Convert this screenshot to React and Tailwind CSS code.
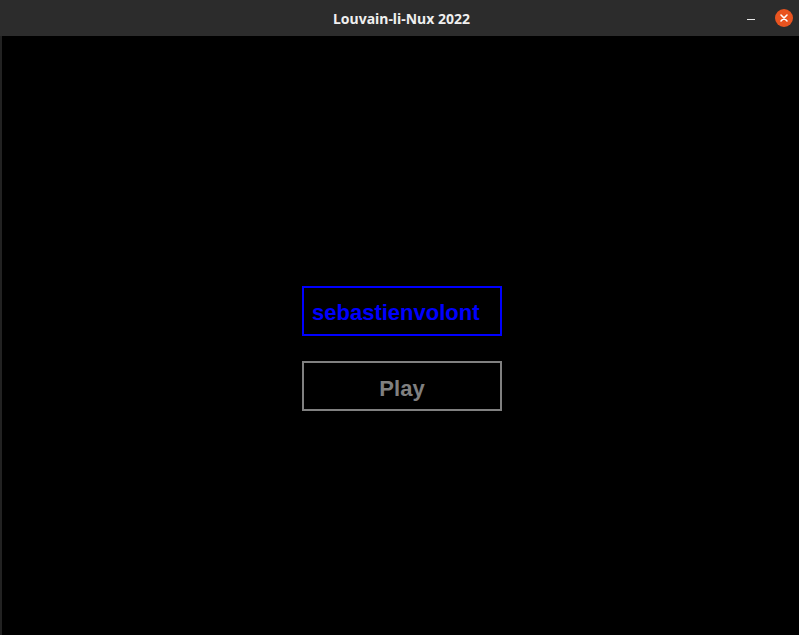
import React from "react";

function TitleBar() {
  return (
    <div className="relative h-[36px] bg-[#2c2c2c] flex items-center justify-center">
      <span
        className="text-[14px] font-bold text-[#efefef] ml-[4px]"
        style={{ fontFamily: '"Noto Sans", "DejaVu Sans", sans-serif' }}
      >
        Louvain-li-Nux 2022
      </span>
      <div className="absolute right-[6px] top-0 h-full flex items-center gap-[20px]">
        {/* minimize */}
        <div className="w-[8px] h-[1px] bg-[#e8e8e8] mt-[3px]" />
        {/* close */}
        <div className="w-[18px] h-[18px] rounded-full bg-[#e95420] flex items-center justify-center mr-[0px]">
          <svg width="10" height="10" viewBox="0 0 10 10">
            <path d="M2 2 L8 8 M8 2 L2 8" stroke="#ffffff" strokeWidth="1.6" strokeLinecap="round" />
          </svg>
        </div>
      </div>
    </div>
  );
}

export default function App() {
  return (
    <div className="w-[799px] h-[635px] bg-black flex flex-col overflow-hidden">
      <TitleBar />
      <div
        className="flex-1 bg-black border-l-2 border-[#222222] flex flex-col pt-[250px] pl-[300px] gap-[25px]"
        style={{ fontFamily: '"Liberation Sans", Arial, sans-serif' }}
      >
        <div className="w-[200px] h-[50px] border-2 border-[#0000ff] flex items-center pl-[8px] pt-[4px]">
          <span className="text-[22px] font-bold text-[#0000ff] leading-none">sebastienvolont</span>
        </div>
        <div className="w-[200px] h-[50px] border-2 border-[#808080] flex items-center justify-center pt-[6px]">
          <span className="text-[22px] font-bold text-[#808080] leading-none">Play</span>
        </div>
      </div>
    </div>
  );
}
